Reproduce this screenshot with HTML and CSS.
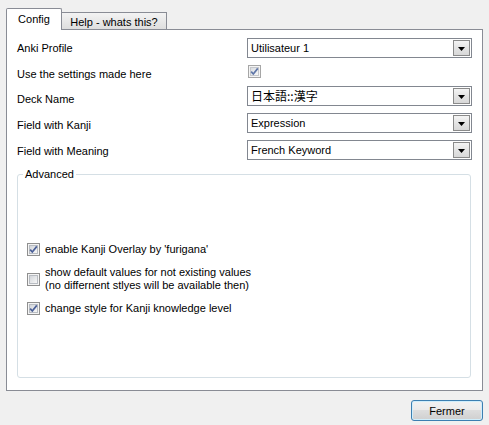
FILE: index.html
```html
<!DOCTYPE html>
<html>
<head>
<meta charset="utf-8">
<link rel="stylesheet" href="styles.css">
</head>
<body>
<div class="window">
  <div class="tabs">
    <div class="tab tab-active">Config</div>
    <div class="tab tab-inactive">Help - whats this?</div>
  </div>
  <div class="panel">
    <div class="form">
      <div class="label l1">Anki Profile</div>
      <div class="field"><div class="combo"><span class="combo-text">Utilisateur 1</span><span class="combo-btn"><svg width="7" height="4" viewBox="0 0 7 4"><path d="M0 0H7L3.5 4Z" fill="#000"/></svg></span></div></div>

      <div class="label l2">Use the settings made here</div>
      <div class="field"><span class="cb cb-disabled"><span class="cb-in"><svg width="9" height="9" viewBox="0 0 9 9"><path d="M1.2 4.6 L3.3 7 L7.8 1.4" fill="none" stroke="#5f76a8" stroke-width="1.7"/></svg></span></span></div>

      <div class="label l3">Deck Name</div>
      <div class="field"><div class="combo"><span class="combo-text jp">日本語::漢字</span><span class="combo-btn"><svg width="7" height="4" viewBox="0 0 7 4"><path d="M0 0H7L3.5 4Z" fill="#000"/></svg></span></div></div>

      <div class="label l4">Field with Kanji</div>
      <div class="field"><div class="combo"><span class="combo-text">Expression</span><span class="combo-btn"><svg width="7" height="4" viewBox="0 0 7 4"><path d="M0 0H7L3.5 4Z" fill="#000"/></svg></span></div></div>

      <div class="label l5">Field with Meaning</div>
      <div class="field"><div class="combo"><span class="combo-text">French Keyword</span><span class="combo-btn"><svg width="7" height="4" viewBox="0 0 7 4"><path d="M0 0H7L3.5 4Z" fill="#000"/></svg></span></div></div>
    </div>

    <fieldset class="group">
      <legend class="group-title">Advanced</legend>
      <div class="adv">
        <div class="opt">
          <span class="cb"><span class="cb-in"><svg width="9" height="9" viewBox="0 0 9 9"><path d="M1.2 4.6 L3.3 7 L7.8 1.4" fill="none" stroke="#4a5f97" stroke-width="1.7"/></svg></span></span>
          <span class="opt-text">enable Kanji Overlay by 'furigana'</span>
        </div>
        <div class="opt">
          <span class="cb"><span class="cb-in"></span></span>
          <span class="opt-text">show default values for not existing values<br>(no differnent stlyes will be available then)</span>
        </div>
        <div class="opt">
          <span class="cb"><span class="cb-in"><svg width="9" height="9" viewBox="0 0 9 9"><path d="M1.2 4.6 L3.3 7 L7.8 1.4" fill="none" stroke="#4a5f97" stroke-width="1.7"/></svg></span></span>
          <span class="opt-text">change style for Kanji knowledge level</span>
        </div>
      </div>
    </fieldset>
  </div>
  <div class="footer">
    <button class="btn">Fermer</button>
  </div>
</div>
</body>
</html>
```
FILE: styles.css
```css
html, body {
  margin: 0;
  padding: 0;
  background: #f0f0f0;
}
body {
  font-family: "Liberation Sans", Arial, "Noto Sans CJK JP", sans-serif;
  font-size: 11px;
  color: #000;
}
.window {
  padding: 8px 6px 0 6px;
  width: 489px;
  height: 425px;
  box-sizing: border-box;
}
.tabs {
  display: flex;
  align-items: flex-end;
  height: 21px;
}
.tab {
  box-sizing: border-box;
  display: flex;
  align-items: center;
  justify-content: center;
}
.tab-active {
  width: 56px;
  height: 22px;
  border: 1px solid #898c95;
  border-bottom: none;
  background: #fff;
  margin-bottom: -1px;
  position: relative;
  z-index: 1;
  padding-bottom: 2px;
  border-radius: 2px 2px 0 0;
}
.tab-inactive {
  width: 105px;
  height: 17px;
  border: 1px solid #898c95;
  border-left: none;
  border-bottom: none;
  background: linear-gradient(#f3f3f3, #dedede);
  padding-top: 1px;
}
.panel {
  box-sizing: border-box;
  height: 362px;
  border: 1px solid #898c95;
  background: #fff;
  padding: 8px 10px 12px 10px;
  display: flex;
  flex-direction: column;
}
.form {
  display: grid;
  grid-template-columns: 230px 225px;
  grid-template-rows: 24px 24px 27px 27px 20px;
}
.label {
  line-height: 13px;
  white-space: nowrap;
}
.l1 { padding-top: 4px; }
.l2 { padding-top: 6px; }
.l3 { padding-top: 7px; }
.l4 { padding-top: 6px; }
.l5 { padding-top: 5px; }
.field {
  display: flex;
  align-items: flex-start;
}
.combo {
  box-sizing: border-box;
  width: 225px;
  height: 20px;
  border: 1px solid #828790;
  background: #fff;
  padding: 1px;
  display: flex;
}
.combo-text {
  flex: 1;
  padding-left: 2px;
  line-height: 16px;
  white-space: nowrap;
}
.combo-text.jp {
  font-family: "Noto Sans CJK JP", sans-serif;
  font-size: 12px;
  line-height: 16px;
}
.combo-btn {
  box-sizing: border-box;
  width: 17px;
  height: 16px;
  border: 1px solid #8a8a8a;
  background: linear-gradient(#f4f4f4, #e4e4e4 50%, #d8d8d8);
  display: flex;
  align-items: center;
  justify-content: center;
}
.combo-btn svg {
  display: block;
  margin-top: 1px;
}
.cb {
  box-sizing: border-box;
  width: 13px;
  height: 13px;
  border: 1px solid #8f8f8f;
  background: #f4f4f4;
  padding: 1px;
  display: inline-block;
  flex: none;
}
.cb-in {
  box-sizing: border-box;
  display: block;
  width: 9px;
  height: 9px;
  border: 1px solid #b8bcc2;
  background: linear-gradient(135deg, #d2d5da, #f7f7f7);
  position: relative;
}
.cb-in svg {
  position: absolute;
  left: -1px;
  top: -1px;
}
.cb-disabled {
  border-color: #a6a6a6;
  margin-top: 3px;
  margin-left: 1px;
}
.cb-disabled .cb-in {
  border-color: #c6c8cc;
  background: linear-gradient(135deg, #dadde1, #f7f7f7);
}
.group {
  flex: 1;
  margin: 8px 1px 0 0;
  padding: 0 9px;
  border: 1px solid #d5dfe5;
  border-radius: 3px;
  min-width: 0;
}
.group-title {
  padding: 0 2px;
  margin-left: -4px;
  line-height: 13px;
}
.adv {
  margin-top: 62px;
  display: flex;
  flex-direction: column;
  gap: 10px;
}
.opt {
  display: flex;
  align-items: center;
  gap: 5px;
}
.opt-text {
  line-height: 13px;
  white-space: nowrap;
}
.footer {
  display: flex;
  justify-content: flex-end;
  padding-top: 9px;
}
.btn {
  box-sizing: border-box;
  width: 72px;
  height: 21px;
  border: 1px solid #3c7fb1;
  border-radius: 3px;
  background: linear-gradient(#f2f2f2 0%, #ebebeb 45%, #dddddd 50%, #cfcfcf 100%);
  box-shadow: inset 0 0 0 1px #cfeefc;
  font-family: "Liberation Sans", Arial, sans-serif;
  font-size: 11px;
  color: #000;
  padding: 0;
}
```
